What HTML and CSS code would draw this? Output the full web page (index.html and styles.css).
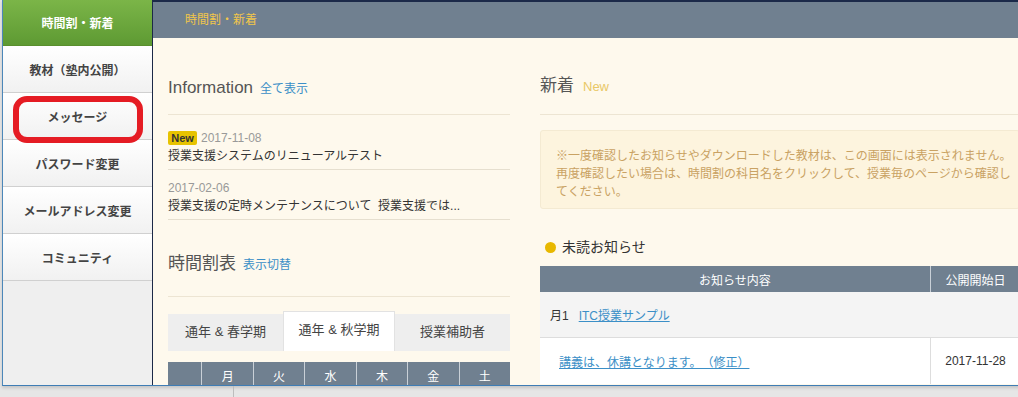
FILE: index.html
```html
<!DOCTYPE html>
<html lang="ja">

<head>
    <meta charset="UTF-8">
    <title>時間割・新着</title>
    <link rel="stylesheet" href="styles.css">
</head>

<body>
    <div class="window">
        <nav class="side">
            <a class="side-item on">時間割・新着</a>
            <a class="side-item">教材（塾内公開）</a>
            <a class="side-item">メッセージ</a>
            <a class="side-item">パスワード変更</a>
            <a class="side-item">メールアドレス変更</a>
            <a class="side-item">コミュニティ</a>
            <span class="mark"></span>
        </nav>

        <div class="main">
            <header class="bar">時間割・新着</header>

            <div class="content">
                <section class="col-left">
                    <div class="sec-head">
                        <h2>Information</h2>
                        <a class="sub">全て表示</a>
                    </div>
                    <div class="info-item first">
                        <div class="info-date"><span class="badge">New</span>2017-11-08</div>
                        <div class="info-title">授業支援システムのリニューアルテスト</div>
                    </div>
                    <div class="info-item">
                        <div class="info-date">2017-02-06</div>
                        <div class="info-title">授業支援の定時メンテナンスについて&nbsp;&nbsp;授業支援では...</div>
                    </div>

                    <div class="sec-head time">
                        <h2>時間割表</h2>
                        <a class="sub">表示切替</a>
                    </div>
                    <div class="tabs">
                        <div class="tab">通年 &amp; 春学期</div>
                        <div class="tab active">通年 &amp; 秋学期</div>
                        <div class="tab">授業補助者</div>
                    </div>
                    <table class="week">
                        <tr>
                            <th class="w0"></th>
                            <th>月</th>
                            <th>火</th>
                            <th>水</th>
                            <th>木</th>
                            <th>金</th>
                            <th>土</th>
                        </tr>
                    </table>
                </section>

                <section class="col-right">
                    <div class="sec-head news">
                        <h2>新着</h2>
                        <span class="sub new">New</span>
                    </div>
                    <div class="notice">
                        ※一度確認したお知らせやダウンロードした教材は、この画面には表示されません。<br>
                        再度確認したい場合は、時間割の科目名をクリックして、授業毎のページから確認し<br>
                        てください。
                    </div>
                    <h3 class="unread"><span class="dot"></span>未読お知らせ</h3>
                    <table class="list">
                        <tr>
                            <th class="c1">お知らせ内容</th>
                            <th class="c2">公開開始日</th>
                        </tr>
                        <tr class="group">
                            <td colspan="2">月1&nbsp;&nbsp;&nbsp;<a>ITC授業サンプル</a></td>
                        </tr>
                        <tr class="row">
                            <td class="c1"><a>講義は、休講となります。（修正）</a></td>
                            <td class="c2">2017-11-28</td>
                        </tr>
                    </table>
                </section>
            </div>
        </div>
    </div>
    <div class="under"><span class="under-line"></span></div>
</body>

</html>
```

FILE: styles.css
```css
html,
body {
    margin: 0;
    width: 1018px;
    height: 397px;
    overflow: hidden;
}

body {
    background: #e6e6e6;
    font-family: "Liberation Sans", "Noto Sans CJK JP", sans-serif;
    color: #333;
    text-spacing-trim: space-all;
}

h2,
h3 {
    margin: 0;
    font-weight: normal;
}

a {
    color: #3b8fc7;
    cursor: pointer;
}

.window {
    display: flex;
    width: 1100px;
    height: 385px;
    margin-left: 2px;
    border-left: 1px solid #4c87b9;
    border-bottom: 1px solid #3f7db5;
    box-shadow: 0 2px 3px rgba(0, 0, 0, 0.15);
}

/* サイドメニュー */
.side {
    position: relative;
    flex: none;
    width: 149px;
    background: #efefef;
    border-right: 1px solid #1c2947;
}

.side-item {
    display: flex;
    align-items: center;
    justify-content: center;
    height: 46px;
    border-bottom: 1px solid #d0d0d0;
    background: linear-gradient(#ffffff, #f1f1f1);
    font-size: 12px;
    font-weight: bold;
    color: #444;
}

.side-item.on {
    height: 45px;
    border-bottom-color: #5a8f2e;
    background: linear-gradient(#7bb548, #5e9a33);
    color: #fff;
}

/* 赤枠の注記 */
.mark {
    position: absolute;
    left: 10px;
    top: 96px;
    width: 118px;
    height: 35px;
    border: 6px solid #e51c24;
    border-radius: 14px;
    pointer-events: none;
}

.main {
    flex: 1;
    display: flex;
    flex-direction: column;
    border-top: 2px solid #1b2949;
    background: #fef9ed;
}

.bar {
    height: 36px;
    line-height: 36px;
    padding-left: 32px;
    background: #708090;
    color: #f2c64a;
    font-size: 12px;
}

.content {
    display: flex;
    gap: 30px;
    padding-left: 15px;
    overflow: hidden;
}

.col-left {
    flex: none;
    width: 342px;
}

.col-right {
    flex: none;
    width: 480px;
}

.sec-head {
    display: flex;
    align-items: baseline;
    gap: 7px;
    padding: 38px 0 13px;
    line-height: 24px;
    border-bottom: 1px solid #ede5d3;
}

.sec-head h2 {
    font-size: 17px;
    color: #555;
}

.sec-head .sub {
    font-size: 12px;
}

.sec-head.news {
    padding: 36px 0 15px;
    gap: 9px;
}

.sec-head .new {
    color: #e9c866;
    font-size: 13px;
}

.sec-head.time {
    padding: 32px 0 19px;
}

/* Information */
.info-item {
    padding: 9px 0 4px;
    line-height: 18px;
    border-bottom: 1px solid #e6dfcf;
    font-size: 12px;
}

.info-item.first {
    padding: 14px 0 4px;
}

.info-date {
    display: flex;
    align-items: center;
    color: #999;
}

.badge {
    display: inline-block;
    width: 29px;
    height: 14px;
    line-height: 14px;
    margin-right: 4px;
    border-radius: 2px;
    background: #e7c300;
    color: #333;
    font-size: 11px;
    font-weight: bold;
    text-align: center;
}

.info-title {
    color: #333;
}

/* 時間割 */
.tabs {
    display: flex;
    margin-top: 16px;
    height: 38px;
    align-items: flex-end;
}

.tab {
    height: 37px;
    line-height: 36px;
    width: 115px;
    background: #eeeeee;
    color: #444;
    font-size: 13px;
    text-align: center;
}

.tab.active {
    width: 110px;
    height: 39px;
    background: #fff;
    border: 1px solid #e2e2e2;
    border-bottom: none;
}

.week {
    width: 342px;
    margin-top: 11px;
    border-collapse: collapse;
}

.week th {
    height: 26px;
    width: 51px;
    padding: 0;
    background: #708090;
    color: #fff;
    font-size: 12px;
    font-weight: normal;
    border-right: 1px solid #c9d0d7;
}

.week th.w0 {
    width: 34px;
}

.week th:last-child {
    border-right: none;
}

/* 新着 */
.notice {
    margin-top: 15px;
    padding: 16px 15px 7px;
    border: 1px solid #f4ead2;
    border-radius: 3px;
    background: #fdf4de;
    color: #c9a263;
    font-size: 12px;
    line-height: 18px;
    white-space: nowrap;
}

.unread {
    display: flex;
    align-items: center;
    margin: 28px 0 9px;
    padding-left: 5px;
    line-height: 20px;
    font-size: 14px;
    color: #333;
}

.dot {
    width: 11px;
    height: 11px;
    margin-right: 6px;
    border-radius: 50%;
    background: #e8b800;
}

.list {
    width: 480px;
    table-layout: fixed;
    border-collapse: collapse;
    font-size: 12px;
}

.list th {
    height: 26px;
    padding: 0;
    background: #708090;
    color: #fff;
    font-weight: normal;
}

.list th.c1 {
    width: 390px;
    border-right: 1px solid #c9d0d7;
}

.list .group td {
    height: 45px;
    padding: 0 10px;
    background: #f4f4f4;
    border-bottom: 1px solid #dddddd;
}

.list .row td {
    height: 46px;
    padding: 0;
    background: #fff;
}

.list .row td.c1 {
    padding-left: 19px;
    border-right: 1px solid #dddddd;
}

.list .row td.c2 {
    text-align: center;
}

.list a {
    text-decoration: underline;
}

.under {
    height: 11px;
}

.under-line {
    display: block;
    width: 1px;
    height: 11px;
    margin-left: 233px;
    background: #bdbdbd;
}
```
